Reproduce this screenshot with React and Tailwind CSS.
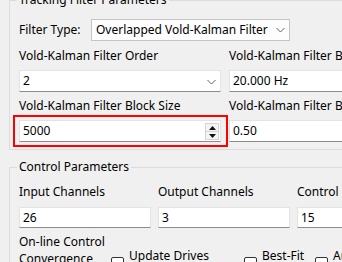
import React from "react";

function Chevron({ className = "" }) {
  return (
    <svg width="9" height="6" viewBox="0 0 9 6" className={className}>
      <path d="M0.5 1 L4.5 5 L8.5 1" fill="none" stroke="#606060" strokeWidth="1" />
    </svg>
  );
}

function TextBox({ value, children, className = "" }) {
  return (
    <div
      className={`relative flex items-center h-[22px] bg-white border border-[#e3e3e3] border-b-[#8c8c8c] pl-[3px] ${className}`}
    >
      <span className="leading-none">{value}</span>
      {children}
    </div>
  );
}

function CheckBox({ label }) {
  return (
    <div className="flex items-start">
      <div className="mt-[9px] w-[13px] h-[13px] shrink-0 bg-white border border-[#333333] rounded-[2px]" />
      <span className="ml-[5px] leading-[16px] whitespace-nowrap">{label}</span>
    </div>
  );
}

export default function App() {
  return (
    <div className="w-[342px] h-[262px] overflow-hidden bg-[#f0f0f0] text-[12px] text-black font-['Noto_Sans',sans-serif]">
      {/* Tracking Filter Parameters */}
      <fieldset className="ml-[9px] mt-[-8px] w-[380px] h-[158px] border border-[#dcdcdc] px-[9px]">
        <legend className="ml-[-2px] px-[2px] leading-[16px]">Tracking Filter Parameters</legend>
        <div className="flex items-center h-[22px] mt-[11px]">
          <span className="w-[72px] leading-none">Filter Type:</span>
          <div className="flex items-center justify-between w-[199px] h-[22px] bg-[#fdfdfd] border border-[#c4c4c4] pl-[4px] pr-[4px]">
            <span className="leading-none">Overlapped Vold-Kalman Filter</span>
            <Chevron />
          </div>
        </div>
        <div className="grid grid-cols-[202px_202px] gap-x-[8px]">
          <div className="mt-[7px] h-[16px] leading-[16px] whitespace-nowrap">Vold-Kalman Filter Order</div>
          <div className="mt-[7px] h-[16px] leading-[16px] whitespace-nowrap">Vold-Kalman Filter Bandwidth</div>
          <TextBox value="2" className="mt-[6px]">
            <Chevron className="absolute right-[4px] top-[8px]" />
          </TextBox>
          <TextBox value="20.000 Hz" className="mt-[6px]" />
          <div className="mt-[6px] h-[16px] leading-[16px] whitespace-nowrap">Vold-Kalman Filter Block Size</div>
          <div className="mt-[6px] h-[16px] leading-[16px] whitespace-nowrap">Vold-Kalman Filter Bandwidth Ratio</div>
          <TextBox value="5000" className="mt-[6px]">
            <div className="absolute right-[1px] top-[2px] w-[14px] h-[17px] flex flex-col border border-[#d4d4d4] bg-[#f5f5f5]">
              <div className="flex-1 flex items-center justify-center border-b border-[#d4d4d4]">
                <svg width="7" height="4" viewBox="0 0 7 4"><path d="M3.5 0 L7 4 L0 4 Z" fill="#111" /></svg>
              </div>
              <div className="flex-1 flex items-center justify-center">
                <svg width="7" height="4" viewBox="0 0 7 4"><path d="M0 0 L7 0 L3.5 4 Z" fill="#111" /></svg>
              </div>
            </div>
            <div className="absolute left-[-7px] right-[-8px] top-[-6px] bottom-[-6px] border-2 border-[#ff0000] pointer-events-none" />
          </TextBox>
          <TextBox value="0.50" className="mt-[6px]" />
        </div>
      </fieldset>

      {/* Control Parameters */}
      <fieldset className="ml-[9px] mt-[9px] w-[380px] h-[140px] border border-[#dcdcdc] px-[9px]">
        <legend className="ml-[-2px] px-[2px] leading-[16px]">Control Parameters</legend>
        <div className="grid grid-cols-[132px_132px_132px] gap-x-[7px]">
          <div className="mt-[9px] h-[16px] leading-[16px] whitespace-nowrap">Input Channels</div>
          <div className="mt-[9px] h-[16px] leading-[16px] whitespace-nowrap">Output Channels</div>
          <div className="mt-[9px] h-[16px] leading-[16px] whitespace-nowrap">Control Channels</div>
          <TextBox value="26" className="mt-[7px] !h-[21px]" />
          <TextBox value="3" className="mt-[7px] !h-[21px]" />
          <TextBox value="15" className="mt-[7px] !h-[21px]" />
        </div>
        <div className="flex mt-[5px]">
          <div className="w-[92px] leading-[17px]">
            On-line Control
            <br />
            Convergence
          </div>
          <div className="w-[133px] pt-[15px]">
            <CheckBox label="Update Drives" />
          </div>
          <div className="w-[71px] pt-[15px]">
            <CheckBox label="Best-Fit" />
          </div>
          <div className="pt-[15px]">
            <CheckBox label="Auto" />
          </div>
        </div>
      </fieldset>
    </div>
  );
}
